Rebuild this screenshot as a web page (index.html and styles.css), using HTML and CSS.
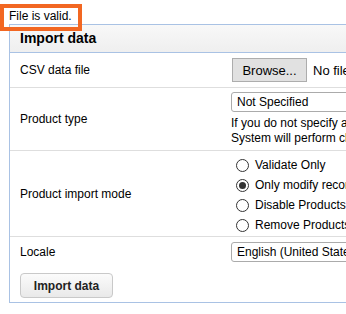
FILE: index.html
```html
<!DOCTYPE html>
<html lang="en">
<head>
<meta charset="UTF-8">
<meta name="viewport" content="width=device-width, initial-scale=1.0">
<title>Import data</title>
<link rel="stylesheet" href="styles.css">
</head>
<body>

<div class="notice">File is valid.</div>
<div class="highlight"></div>

<form class="panel">
  <div class="panel-head">Import data</div>

  <div class="form-row row-file">
    <label class="form-label">CSV data file</label>
    <div class="form-field">
      <button type="button" class="browse">Browse...</button>
      <span class="file-name">No file selected.</span>
    </div>
  </div>

  <div class="form-row row-type">
    <label class="form-label">Product type</label>
    <div class="form-field">
      <select class="select">
        <option>Not Specified</option>
      </select>
      <p class="help">If you do not specify a product type, the<br>System will perform checks automatically.</p>
    </div>
  </div>

  <div class="form-row row-mode">
    <label class="form-label">Product import mode</label>
    <div class="form-field">
      <label class="radio"><input type="radio" name="mode"> Validate Only</label>
      <label class="radio"><input type="radio" name="mode" checked> Only modify records that already exist</label>
      <label class="radio"><input type="radio" name="mode"> Disable Products not in the file</label>
      <label class="radio"><input type="radio" name="mode"> Remove Products not in the file</label>
    </div>
  </div>

  <div class="form-row row-locale">
    <label class="form-label">Locale</label>
    <div class="form-field">
      <select class="select">
        <option>English (United States)</option>
      </select>
    </div>
  </div>

  <div class="form-actions">
    <button type="button" class="button">Import data</button>
  </div>
</form>

</body>
</html>
```

FILE: styles.css
```css
* {
  box-sizing: border-box;
  margin: 0;
  padding: 0;
}

html, body {
  overflow: hidden;
}

body {
  font-family: "Liberation Sans", Arial, sans-serif;
  font-size: 12px;
  color: #000;
  background-color: #fff;
  position: relative;
}

.notice {
  padding: 9px 0 0 9px;
  line-height: 14px;
}

/* Recuadro naranja encima del mensaje */
.highlight {
  position: absolute;
  left: 0;
  top: 4px;
  width: 82px;
  height: 27px;
  border: 4px solid #f26722;
}

.panel {
  width: 420px;
  margin: 1px 0 0 9px;
  border: 1px solid #a9c2e4;
}

.panel-head {
  height: 28px;
  line-height: 27px;
  padding-left: 10px;
  font-size: 14px;
  font-weight: bold;
  background: linear-gradient(#f8f8f8, #efefef);
  border-bottom: 1px solid #a9c2e4;
}

.form-row {
  display: grid;
  grid-template-columns: 221px 1fr;
  align-items: center;
  border-bottom: 1px solid #dedede;
}

.form-label {
  padding-left: 10px;
}

.row-file .form-field {
  display: flex;
  align-items: center;
  gap: 6px;
  padding: 5px 0 5px 1px;
  white-space: nowrap;
}

.browse {
  width: 75px;
  height: 24px;
  font-family: "Liberation Sans", Arial, sans-serif;
  font-size: 13px;
  color: #000;
  background-color: #e1e1e1;
  border: 1px solid #adadad;
}

.file-name {
  font-size: 13px;
}

.row-type .form-field {
  padding: 4px 0;
}

.select {
  display: block;
  appearance: none;
  -webkit-appearance: none;
  width: 170px;
  height: 20px;
  padding: 0 5px;
  font-family: "Liberation Sans", Arial, sans-serif;
  font-size: 12px;
  color: #000;
  background-color: #fff;
  border: 1px solid #ababab;
  border-radius: 3px;
}

.help {
  margin-top: 4px;
  line-height: 15px;
  white-space: nowrap;
}

.row-mode .form-field {
  padding: 4px 0 1px;
}

.radio {
  display: flex;
  align-items: center;
  height: 20px;
  white-space: nowrap;
}

.radio input {
  appearance: none;
  -webkit-appearance: none;
  width: 13px;
  height: 13px;
  margin: 0 6px 0 5px;
  border: 1px solid #333;
  border-radius: 50%;
  background-color: #fff;
  display: flex;
  align-items: center;
  justify-content: center;
}

.radio input:checked::after {
  content: "";
  width: 7px;
  height: 7px;
  border-radius: 50%;
  background-color: #333;
}

.row-locale {
  border-bottom: none;
}

.row-locale .form-field {
  padding: 5px 0;
}

.form-actions {
  padding: 6px 10px 4px;
}

.button {
  width: 93px;
  height: 25px;
  font-family: "Liberation Sans", Arial, sans-serif;
  font-size: 12px;
  font-weight: bold;
  color: #222;
  background: linear-gradient(#fbfbfb, #e9e9e9);
  border: 1px solid #c9c9c9;
  border-radius: 4px;
}
```
